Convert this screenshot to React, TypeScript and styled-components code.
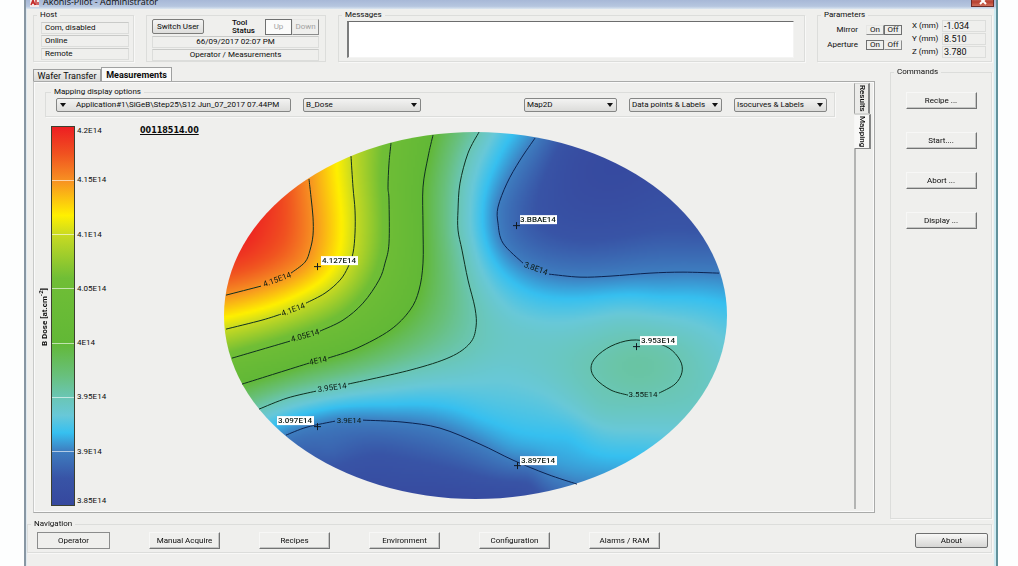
import React, { useLayoutEffect, useRef } from "react";
import styled, { createGlobalStyle, css } from "styled-components";

const GlobalStyle = createGlobalStyle`
  *, *::before, *::after { box-sizing: border-box; }
  body {
    margin: 0;
    background: #fdfefe;
    color: #0c0c0c;
    font: 8px/10px Roboto, "Liberation Sans", sans-serif;
  }
  button, input, select, textarea { font: inherit; color: inherit; margin: 0; border-radius: 0; }
`;

/* ---------- wafer data ---------- */

type Point = [number, number];

const ORIGIN: Point = [224, 132];
const MAP_W = 503;
const MAP_H = 367;

interface Contour {
  value: number;
  parts: Point[][];
  label: string;
  at: Point;
  angle: number;
}

const contours: Contour[] = [
  {
    value: 4.15, label: "4.15E14", at: [277, 279], angle: -20,
    parts: [
      [[309, 179], [311, 197], [313, 217], [313, 235], [310, 250], [305, 262], [291, 273]],
      [[261, 286], [226, 295]],
    ],
  },
  {
    value: 4.1, label: "4.1E14", at: [293, 309], angle: -20,
    parts: [
      [[351, 156], [353, 187], [355, 210], [355, 233], [353, 253], [348, 267], [340, 280], [325, 293], [306, 303]],
      [[281, 314], [262, 320], [226, 329]],
    ],
  },
  {
    value: 4.05, label: "4.05E14", at: [305, 335], angle: -16,
    parts: [
      [[391, 143], [389, 163], [388, 187], [389, 200], [389, 243], [385, 263], [379, 280], [363, 303], [343, 320], [320, 331]],
      [[290, 341], [232, 358]],
    ],
  },
  {
    value: 4.0, label: "4E14", at: [318, 360], angle: -12,
    parts: [
      [[433, 135], [428, 157], [423, 187], [423, 225], [423, 263], [419, 290], [410, 310], [390, 330], [357, 348], [328, 358]],
      [[309, 363], [277, 373], [242, 384]],
    ],
  },
  {
    value: 3.95, label: "3.95E14", at: [332, 387], angle: -8,
    parts: [
      [[479, 132], [468, 153], [460, 183], [458, 210], [458, 230], [462, 250], [468, 280], [475, 308], [476, 327], [470, 343], [450, 357], [410, 370], [348, 384]],
      [[316, 391], [287, 398], [259, 409]],
    ],
  },
  {
    value: 3.9, label: "3.8E14", at: [536, 268], angle: 20,
    parts: [
      [[535, 138], [520, 160], [507, 183], [498, 207], [498, 223], [503, 243], [523, 263]],
      [[549, 274], [580, 277], [610, 276], [650, 273], [683, 272], [719, 273]],
    ],
  },
  {
    value: 3.9, label: "3.9E14", at: [349, 420], angle: 0,
    parts: [
      [[286, 435], [307, 427], [335, 421]],
      [[363, 420], [403, 422], [440, 428], [480, 444], [513, 460], [547, 474], [577, 484]],
    ],
  },
  {
    value: 3.95, label: "3.55E14", at: [643, 394], angle: 0,
    parts: [
      [[628, 395], [611, 390], [596, 379], [591, 368], [596, 357], [611, 346], [631, 340], [652, 342], [669, 348], [680, 360], [682, 372], [675, 384], [659, 393]],
    ],
  },
];

const extraSamples: [number, number, number][] = [
  [262, 225, 4.19], [250, 247, 4.19], [236, 272, 4.175], [290, 190, 4.172],
  [280, 225, 4.18], [600, 200, 3.86], [625, 185, 3.857], [700, 240, 3.88],
  [565, 152, 3.868], [660, 200, 3.866], [400, 480, 3.865], [460, 495, 3.858],
  [380, 455, 3.875], [330, 450, 3.886], [530, 480, 3.878], [502, 140, 3.922],
  [480, 210, 3.921], [660, 297, 3.917], [590, 300, 3.919], [620, 317, 3.936],
  [530, 340, 3.94], [500, 370, 3.936], [570, 370, 3.945], [718, 330, 3.931],
  [715, 365, 3.94], [698, 410, 3.941], [600, 410, 3.943], [637, 368, 3.956],
  [540, 400, 3.93], [480, 418, 3.917], [570, 438, 3.917], [637, 453, 3.919],
  [648, 432, 3.932], [390, 402, 3.92],
];

const points = [
  { text: "4.127E14", cross: [317, 266], box: [321, 256] },
  { text: "3.BBAE14", cross: [516, 225], box: [520, 215] },
  { text: "3.953E14", cross: [636, 346], box: [640, 336] },
  { text: "3.097E14", cross: [317, 426], box: [277, 416] },
  { text: "3.897E14", cross: [517, 465], box: [520, 456] },
];

const scale: [number, number, number, number][] = [
  [4.2, 237, 30, 34],
  [4.175, 240, 82, 32],
  [4.15, 247, 146, 34],
  [4.118, 255, 240, 0],
  [4.1, 200, 218, 34],
  [4.06, 112, 190, 54],
  [4.0, 98, 184, 54],
  [3.97, 104, 192, 124],
  [3.95, 106, 198, 180],
  [3.933, 104, 200, 216],
  [3.917, 54, 192, 240],
  [3.9, 62, 126, 192],
  [3.875, 56, 84, 166],
  [3.85, 54, 72, 158],
];

const colourAt = (v: number): [number, number, number] => {
  if (v >= scale[0][0]) return [scale[0][1], scale[0][2], scale[0][3]];
  for (let i = 1; i < scale.length; i++) {
    const a = scale[i - 1];
    const b = scale[i];
    if (v >= b[0]) {
      const t = (a[0] - v) / (a[0] - b[0]);
      return [a[1] + (b[1] - a[1]) * t, a[2] + (b[2] - a[2]) * t, a[3] + (b[3] - a[3]) * t];
    }
  }
  const last = scale[scale.length - 1];
  return [last[1], last[2], last[3]];
};

const scaleGradient = scale
  .map(([v, r, g, b]) => `rgb(${r},${g},${b}) ${(((4.2 - v) / 0.35) * 100).toFixed(1)}%`)
  .join(", ");

/* Thin-plate spline through all samples, lightly smoothed. */
const kernel = (dx: number, dy: number) => {
  const r2 = dx * dx + dy * dy;
  return r2 === 0 ? 0 : r2 * Math.log(r2);
};

const fitField = () => {
  const s: [number, number, number][] = [
    ...contours.flatMap((c) => c.parts.flat().map((p): [number, number, number] => [p[0], p[1], c.value])),
    ...extraSamples,
  ].map(([x, y, v]) => [(x - ORIGIN[0]) / 100, (y - ORIGIN[1]) / 100, v]);
  const n = s.length;
  const m = n + 3;
  const a = s.map((p, i) => [
    ...s.map((q, j) => (i === j ? 0.02 : kernel(p[0] - q[0], p[1] - q[1]))),
    1, p[0], p[1], p[2] - 4,
  ]);
  a.push([...s.map(() => 1), 0, 0, 0, 0]);
  a.push([...s.map((p) => p[0]), 0, 0, 0, 0]);
  a.push([...s.map((p) => p[1]), 0, 0, 0, 0]);
  for (let c = 0; c < m; c++) {
    let pivot = c;
    for (let r = c + 1; r < m; r++) if (Math.abs(a[r][c]) > Math.abs(a[pivot][c])) pivot = r;
    [a[c], a[pivot]] = [a[pivot], a[c]];
    for (let r = 0; r < m; r++) {
      if (r === c) continue;
      const f = a[r][c] / a[c][c];
      if (f !== 0) for (let k = c; k <= m; k++) a[r][k] -= f * a[c][k];
    }
  }
  const w = a.map((row, i) => row[m] / row[i]);
  return (x: number, y: number) => {
    let v = 4 + w[n] + w[n + 1] * x + w[n + 2] * y;
    for (let i = 0; i < n; i++) v += w[i] * kernel(x - s[i][0], y - s[i][1]);
    return v;
  };
};

const smoothPath = (pts: Point[]) => {
  const p = pts.map(([x, y]) => [x - ORIGIN[0], y - ORIGIN[1]]);
  let d = `M${p[0][0]} ${p[0][1]}`;
  for (let i = 0; i < p.length - 1; i++) {
    const p0 = p[Math.max(i - 1, 0)];
    const p1 = p[i];
    const p2 = p[i + 1];
    const p3 = p[Math.min(i + 2, p.length - 1)];
    d += `C${p1[0] + (p2[0] - p0[0]) / 6} ${p1[1] + (p2[1] - p0[1]) / 6} ${p2[0] - (p3[0] - p1[0]) / 6} ${p2[1] - (p3[1] - p1[1]) / 6} ${p2[0]} ${p2[1]}`;
  }
  return d;
};

/* ---------- window ---------- */

const Window = styled.div`
  display: flex;
  flex-direction: column;
  min-height: 100vh;
  margin: 0 20px 0 24px;
  background: #efefed;
  border-left: 2px solid #8897a3;
  border-right: 2px solid #62919b;
  box-shadow: inset -2px 0 #cdebf2, inset 1px 0 #dfe9f0;
`;

const TitleBar = styled.header`
  display: flex;
  align-items: flex-end;
  height: 9px;
  padding: 0 2px 2px 4px;
  gap: 4px;
  overflow: hidden;
  background: linear-gradient(#a7b8d7, #b6c6df 70%, #dbe6f0);
`;

const Logo = styled.svg`
  width: 9px;
  height: 12px;
  flex: none;
`;

const Title = styled.h1`
  flex: 1;
  margin: 0;
  font: 9px/10px "Open Sans", sans-serif;
`;

const CloseButton = styled.button`
  display: grid;
  place-items: center;
  width: 23px;
  height: 12px;
  padding: 0;
  border: 1px solid #6b2c28;
  background: linear-gradient(#c98a80, #b8402f 60%, #d0705c);
`;

const edge = "#dcdddb";

const Group = styled.fieldset<{ $width?: number }>`
  min-width: 0;
  margin: 0;
  padding: 0;
  border: 1px solid ${edge};
  box-shadow: 1px 1px #f8f8f7;
  ${(p) => (p.$width ? `flex: 0 0 ${p.$width}px;` : "flex: 1;")}
`;

const Legend = styled.legend`
  margin-left: 3px;
  padding: 0 3px;
  height: 10px;
`;

const TopRow = styled.section`
  display: flex;
  gap: 12px;
  padding: 1px 4px 0 7px;
`;

const Readout = styled.output<{ $center?: boolean }>`
  display: block;
  height: 12px;
  padding: 0 3px;
  border: 1px solid ${edge};
  border-top-color: #c9cac8;
  text-align: ${(p) => (p.$center ? "center" : "left")};
  white-space: nowrap;
`;

const HostList = styled.div`
  display: grid;
  gap: 1px;
  padding: 2px 4px 1px 7px;
`;

const StatusGroup = styled.div`
  display: grid;
  gap: 1px;
  flex: 0 0 180px;
  margin-top: 5px;
  padding: 2px 6px 0 5px;
  border: 1px solid ${edge};
`;

const StatusBar = styled.div`
  display: flex;
  align-items: center;
  height: 17px;
`;

const StatusLabel = styled.span`
  margin: 0 10px 0 auto;
  line-height: 8px;
  font-weight: 500;
`;

const SwitchButton = styled.button`
  width: 52px;
  height: 15px;
  padding: 0;
  border: 1px solid #7c7c7a;
  border-radius: 2px;
  background: linear-gradient(#f4f4f3, #dededc);
  white-space: nowrap;
`;

const Toggle = styled.button<{ $on?: boolean; $large?: boolean }>`
  width: ${(p) => (p.$large ? 27 : 18)}px;
  height: ${(p) => (p.$large ? 16 : 10)}px;
  padding: 0;
  line-height: 8px;
  border: 1px solid;
  ${(p) =>
    p.$on
      ? css`border-color: #6f7070;`
      : css`border-color: #e6e6e4 #8b8c8c #8b8c8c #e6e6e4;`}
  background: ${(p) => (p.$large && p.$on ? "#fbfbfa" : "#efefed")};
  color: ${(p) => (p.$large ? "#a3a3a2" : "#141414")};
`;

const MessageBox = styled.textarea`
  display: block;
  width: calc(100% - 18px);
  height: 37px;
  margin: 1px 9px 3px 8px;
  border: 1px solid #f4f4f3;
  border-top-color: #6c6d6d;
  border-left: 2px solid #7b7c7c;
  background: #fff;
  resize: none;
  outline: none;
`;

const Parameters = styled.div`
  display: flex;
  justify-content: flex-end;
  gap: 10px;
  padding: 0 5px 0 7px;
`;

const Switches = styled.div`
  display: grid;
  gap: 5px;
  align-content: start;
  padding-top: 5px;
`;

const SwitchRow = styled.div`
  display: flex;
  justify-content: flex-end;
  align-items: center;
  span { margin-right: 8px; }
`;

const Coordinates = styled.div`
  display: grid;
  grid-template-columns: 30px 44px;
  row-gap: 1px;
  align-items: center;
`;

const CoordInput = styled.input`
  width: 100%;
  height: 12px;
  padding: 0 1px;
  border: 1px solid ${edge};
  background: #efefed;
  font-size: 9px;
`;

const Middle = styled.main`
  display: flex;
  gap: 15px;
  height: 452px;
  margin-top: 5px;
  padding: 0 4px 0 7px;
`;

const Workspace = styled.section`
  display: flex;
  flex: 1;
  flex-direction: column;
  min-width: 0;
  padding-bottom: 6px;
`;

const TabBar = styled.nav`
  display: flex;
  align-items: flex-end;
  height: 14px;
`;

const Tab = styled.button<{ $active?: boolean }>`
  width: ${(p) => (p.$active ? 71 : 68)}px;
  height: ${(p) => (p.$active ? 14 : 12)}px;
  padding: 0;
  border: 1px solid #9fa0a0;
  border-bottom: 0;
  background: ${(p) => (p.$active ? "#fafaf9" : "linear-gradient(#f0f0ee, #dadad8)")};
  font-size: 9px;
  font-weight: ${(p) => (p.$active ? 700 : 400)};
  white-space: nowrap;
`;

const TabPanel = styled.div`
  display: flex;
  flex: 1;
  border: 1px solid #a9aaa9;
  border-left-color: #c9cac9;
  box-shadow: inset 1px 1px #fafafa, inset -1px -1px #fafafa;
`;

const PanelBody = styled.div`
  display: flex;
  flex: 1;
  flex-direction: column;
  min-width: 0;
  padding-top: 5px;
`;

const OptionsGroup = styled(Group)`
  flex: none;
  margin: 0 19px 0 11px;
`;

const OptionsLegend = styled(Legend)`
  margin-left: 5px;
`;

const OptionsRow = styled.div`
  display: flex;
  gap: 12px;
  padding: 1px 7px 4px 10px;
`;

const Picker = styled.label<{ $width: number; $leading?: boolean; $push?: boolean }>`
  display: grid;
  align-items: center;
  justify-items: ${(p) => (p.$leading ? "start" : "end")};
  flex: 0 1 ${(p) => p.$width}px;
  margin-left: ${(p) => (p.$push ? "auto" : "0")};
  min-width: 0;
  > * { grid-area: 1 / 1; }
  svg { width: 6px; height: 4px; margin: 0 4px; pointer-events: none; }
  select { padding-left: ${(p) => (p.$leading ? 19 : 2)}px; }
`;

const Select = styled.select`
  width: 100%;
  height: 14px;
  padding: 0;
  border: 1px solid #858685;
  border-radius: 2px;
  background: linear-gradient(#f3f3f2, #dcdcda);
  appearance: none;
`;

const Plot = styled.div`
  display: flex;
  flex: 1;
  align-items: flex-start;
  padding: 9px 10px 0 4px;
`;

const AxisTitle = styled.div`
  width: 13px;
  height: 382px;
  writing-mode: vertical-rl;
  transform: rotate(180deg);
  text-align: center;
  font-weight: 700;
  line-height: 13px;
  sup { font-size: 6px; line-height: 6px; }
`;

const ScaleBar = styled.div`
  display: flex;
  flex-direction: column;
  width: 24px;
  height: 380px;
  border: 1px solid #3c4030;
  background: linear-gradient(${scaleGradient});
`;

const ScaleStep = styled.div`
  flex: 1;
  &:not(:last-child) { border-bottom: 1px solid rgba(255, 255, 255, 0.6); }
`;

const Ticks = styled.ol`
  display: flex;
  flex-direction: column;
  height: 380px;
  width: 65px;
  margin: 0;
  padding: 0 0 0 2px;
  list-style: none;
`;

const Tick = styled.li`
  display: flex;
  flex: 2;
  align-items: center;
  &:first-child { flex: 1; align-items: flex-start; }
  &:last-child { flex: 1; align-items: flex-end; }
`;

const WaferId = styled.strong`
  width: 84px;
  font: 700 8px/10px "DejaVu Sans", sans-serif;
  text-decoration: underline;
`;

const WaferMap = styled.figure`
  display: grid;
  flex: 1;
  max-width: 503px;
  aspect-ratio: 503 / 367;
  margin: 6px 0 0;
  > * { grid-area: 1 / 1; width: 100%; height: 100%; }
  svg { overflow: visible; }
`;

const Heat = styled.canvas`
  border-radius: 50%;
`;

const MapText = styled.text<{ $strong?: boolean }>`
  font: ${(p) => (p.$strong ? 500 : 400)} 8px Roboto, sans-serif;
  text-anchor: middle;
  fill: #0b1a12;
`;

const SideTabs = styled.nav`
  display: flex;
  flex-direction: column;
  align-items: flex-start;
  width: 20px;
  margin: 1px 0 3px;
  &::after { content: ""; flex: 1; border-left: 2px solid #b3b4b3; }
`;

const SideTab = styled.button<{ $active?: boolean }>`
  width: ${(p) => (p.$active ? 17 : 16)}px;
  height: ${(p) => (p.$active ? 35 : 31)}px;
  padding: 0;
  writing-mode: vertical-rl;
  border: 1px solid #d4d5d3;
  border-left-color: ${(p) => (p.$active ? "#f6f6f5" : "#9fa09f")};
  border-right: 2px solid #858686;
  border-bottom-color: ${(p) => (p.$active ? "#858686" : "#d4d5d3")};
  background: ${(p) => (p.$active ? "#f8f8f7" : "#ebebe9")};
  font-weight: 500;
`;

const PushButton = styled.button<{ $look?: "current" | "rounded" }>`
  height: 17px;
  width: 71px;
  padding: 0;
  border: 1px solid;
  border-color: #f7f7f6 #737474 #737474 #f7f7f6;
  box-shadow: inset -1px -1px #c4c5c4;
  background: #efefed;
  white-space: nowrap;
  ${(p) => p.$look === "current" && css`width: 73px; border-color: #8b8c8c; box-shadow: none;`}
  ${(p) =>
    p.$look === "rounded" &&
    css`
      width: 73px;
      height: 15px;
      margin-left: auto;
      border-color: #6f7070;
      border-radius: 2px;
      box-shadow: none;
      background: linear-gradient(#f8f8f7, #d6d6d4);
    `}
`;

const CommandList = styled.div`
  display: grid;
  justify-items: center;
  gap: 23px;
  padding: 15px 0 0;
`;

const NavGroup = styled(Group)`
  flex: none;
  margin: 0 4px 0 1px;
`;

const NavRow = styled.div`
  display: flex;
  align-items: center;
  gap: 39px;
  padding: 3px 3px 3px 9px;
`;

/* ---------- parts ---------- */

const Arrow = () => (
  <svg viewBox="0 0 6 4" aria-hidden="true">
    <path d="M0 0h6L3 4z" fill="#111" />
  </svg>
);

const Option = ({ value, name, width, leading, push }: { value: string; name: string; width: number; leading?: boolean; push?: boolean }) => (
  <Picker $width={width} $leading={leading} $push={push}>
    <Select aria-label={name}>
      <option>{value}</option>
    </Select>
    <Arrow />
  </Picker>
);

const Wafer = () => {
  const ref = useRef<HTMLCanvasElement>(null);
  useLayoutEffect(() => {
    const canvas = ref.current;
    const ctx = canvas?.getContext("2d");
    if (!canvas || !ctx) return;
    const field = fitField();
    const image = ctx.createImageData(canvas.width, canvas.height);
    for (let y = 0; y < canvas.height; y++) {
      for (let x = 0; x < canvas.width; x++) {
        const v = field(((x + 0.5) * MAP_W) / canvas.width / 100, ((y + 0.5) * MAP_H) / canvas.height / 100);
        const [r, g, b] = colourAt(v);
        const i = (y * canvas.width + x) * 4;
        image.data[i] = r;
        image.data[i + 1] = g;
        image.data[i + 2] = b;
        image.data[i + 3] = 255;
      }
    }
    ctx.putImageData(image, 0, 0);
  }, []);
  return (
    <WaferMap aria-label="Dose map">
      <Heat ref={ref} width={252} height={184} />
      <svg viewBox={`0 0 ${MAP_W} ${MAP_H}`}>
        {contours.map((c, i) => {
          const x = c.at[0] - ORIGIN[0];
          const y = c.at[1] - ORIGIN[1];
          return (
            <g key={i}>
              {c.parts.map((part, k) => (
                <path key={k} d={smoothPath(part)} fill="none" stroke={c.value === 3.9 ? "#0c2350" : "#0f3020"} strokeWidth="1" />
              ))}
              <MapText x={x} y={y + 3} transform={`rotate(${c.angle} ${x} ${y})`}>{c.label}</MapText>
            </g>
          );
        })}
        {points.map((p) => {
          const cx = p.cross[0] - ORIGIN[0];
          const cy = p.cross[1] - ORIGIN[1];
          const bx = p.box[0] - ORIGIN[0];
          const by = p.box[1] - ORIGIN[1];
          return (
            <g key={p.text}>
              <path d={`M${cx - 3} ${cy + 0.5}h7M${cx + 0.5} ${cy - 3}v7`} stroke="#101820" strokeWidth="1" />
              <rect x={bx} y={by} width="37" height="9" fill="#fff" />
              <MapText $strong x={bx + 18} y={by + 7}>{p.text}</MapText>
            </g>
          );
        })}
      </svg>
    </WaferMap>
  );
};

const ticks = ["4.2E14", "4.15E14", "4.1E14", "4.05E14", "4E14", "3.95E14", "3.9E14", "3.85E14"];
const coords = [["X", "-1.034"], ["Y", "8.510"], ["Z", "3.780"]];
const commands = ["Recipe ...", "Start....", "Abort ...", "Display ..."];
const pages = ["Operator", "Manual Acquire", "Recipes", "Environment", "Configuration", "Alarms / RAM"];

export default function App() {
  return (
    <>
      <GlobalStyle />
      <Window>
        <TitleBar>
          <Logo viewBox="0 0 9 12" aria-hidden="true">
            <rect width="9" height="12" fill="#f3e9ea" />
            <path d="M1 10l2-5 2 5M2 8h2M6 5v5M8 7v3" stroke="#c22a2a" strokeWidth="1.4" fill="none" />
          </Logo>
          <Title>Akonis-Pilot - Administrator</Title>
          <CloseButton aria-label="Close">
            <svg width="8" height="8" viewBox="0 0 8 8">
              <path d="M1 1l6 6M7 1L1 7" stroke="#fff" strokeWidth="2" />
            </svg>
          </CloseButton>
        </TitleBar>

        <TopRow>
          <Group $width={101}>
            <Legend>Host</Legend>
            <HostList>
              <Readout>Com, disabled</Readout>
              <Readout>Online</Readout>
              <Readout>Remote</Readout>
            </HostList>
          </Group>

          <StatusGroup>
            <StatusBar>
              <SwitchButton>Switch User</SwitchButton>
              <StatusLabel>Tool<br />Status</StatusLabel>
              <Toggle $large $on>Up</Toggle>
              <Toggle $large>Down</Toggle>
            </StatusBar>
            <Readout $center>66/09/2017 02:07 PM</Readout>
            <Readout $center>Operator / Measurements</Readout>
          </StatusGroup>

          <Group>
            <Legend>Messages</Legend>
            <MessageBox aria-label="Messages" readOnly />
          </Group>

          <Group $width={175}>
            <Legend>Parameters</Legend>
            <Parameters>
              <Switches>
                <SwitchRow><span>Mirror</span><Toggle>On</Toggle><Toggle $on>Off</Toggle></SwitchRow>
                <SwitchRow><span>Aperture</span><Toggle $on>On</Toggle><Toggle>Off</Toggle></SwitchRow>
              </Switches>
              <Coordinates>
                {coords.map(([axis, value]) => (
                  <React.Fragment key={axis}>
                    <label htmlFor={`pos-${axis}`}>{axis} (mm)</label>
                    <CoordInput id={`pos-${axis}`} defaultValue={value} />
                  </React.Fragment>
                ))}
              </Coordinates>
            </Parameters>
          </Group>
        </TopRow>

        <Middle>
          <Workspace>
            <TabBar>
              <Tab>Wafer Transfer</Tab>
              <Tab $active>Measurements</Tab>
            </TabBar>
            <TabPanel>
              <PanelBody>
                <OptionsGroup>
                  <OptionsLegend>Mapping display options</OptionsLegend>
                  <OptionsRow>
                    <Option name="Measurement" value="Application#1\SiGeB\Step25\S12 Jun_07_2017 07.44PM" width={235} leading />
                    <Option name="Quantity" value="B_Dose" width={118} />
                    <Option name="Map type" value="Map2D" width={93} push />
                    <Option name="Points" value="Data points & Labels" width={93} />
                    <Option name="Curves" value="Isocurves & Labels" width={93} />
                  </OptionsRow>
                </OptionsGroup>
                <Plot>
                  <AxisTitle>B Dose [at.cm<sup>-2</sup>]</AxisTitle>
                  <ScaleBar>
                    {ticks.slice(1).map((t) => <ScaleStep key={t} />)}
                  </ScaleBar>
                  <Ticks>
                    {ticks.map((t) => <Tick key={t}>{t}</Tick>)}
                  </Ticks>
                  <WaferId>00118514.00</WaferId>
                  <Wafer />
                </Plot>
              </PanelBody>
              <SideTabs>
                <SideTab>Results</SideTab>
                <SideTab $active>Mapping</SideTab>
              </SideTabs>
            </TabPanel>
          </Workspace>

          <Group $width={102}>
            <Legend>Commands</Legend>
            <CommandList>
              {commands.map((c) => <PushButton key={c}>{c}</PushButton>)}
            </CommandList>
          </Group>
        </Middle>

        <NavGroup>
          <Legend>Navigation</Legend>
          <NavRow>
            {pages.map((p, i) => (
              <PushButton key={p} $look={i === 0 ? "current" : undefined}>{p}</PushButton>
            ))}
            <PushButton $look="rounded">About</PushButton>
          </NavRow>
        </NavGroup>
      </Window>
    </>
  );
}
